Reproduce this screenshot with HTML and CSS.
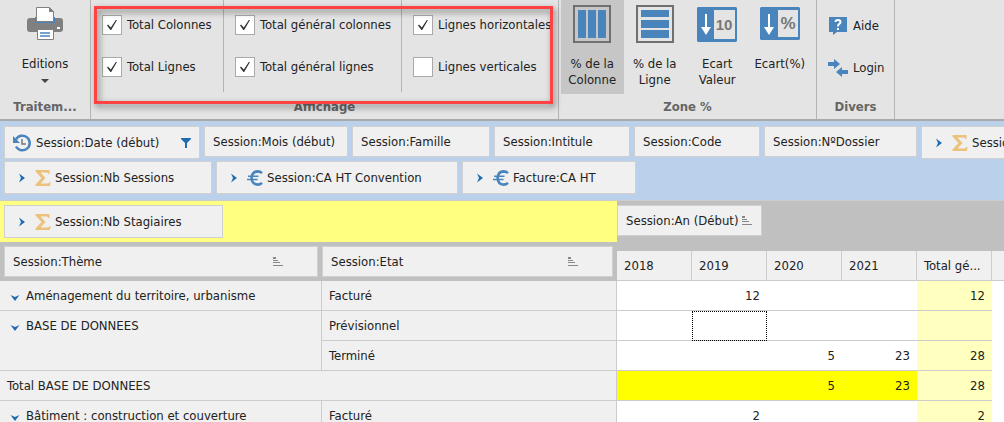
FILE: index.html
```html
<!DOCTYPE html>
<html lang="fr">
<head>
  <meta charset="UTF-8">
  <meta name="viewport" content="width=device-width, initial-scale=1.0">
  <title>Statistiques sessions</title>
  <link rel="stylesheet" href="styles.css">
</head>
<body>
  <!-- Shared icons -->
  <svg class="sprite" aria-hidden="true">
    <symbol id="sort" viewBox="0 0 10 10">
      <path fill="#888" d="M0 0h3v2H0zM0 3h5v1H0zM0 5h7v1H0zM0 8h10v1H0z"/>
    </symbol>
    <symbol id="sigma" viewBox="0 0 15 16">
      <path fill="#ecc17c" d="M0 0h14v4h-1q-.5-1.500-2-1.500H5l5 5.500-5 5.500h7q1.500 0 2-1.500h1l-.5 4H0v-1.500L6 8 0 1.500z"/>
    </symbol>
    <symbol id="euro" viewBox="0 0 16 16">
      <path fill="none" stroke="#4a84bd" stroke-width="2.600" d="M15 3.200Q13.200 1.400 10.500 1.400 5 1.600 4.600 8 5 14.400 10.500 14.600q2.700 0 4.500-1.800"/>
      <path stroke="#4a84bd" stroke-width="1.500" d="M1 6.200h10.500M0 9.500h10.500"/>
    </symbol>
    <symbol id="chevron" viewBox="0 0 6 10">
      <path fill="#1f6bb0" d="M0 .5 6 5 0 9.500 2 5z"/>
    </symbol>
    <symbol id="down" viewBox="0 0 10 6">
      <path fill="#1f6bb0" d="M.5 0 5 2l4.500-2L5 6z"/>
    </symbol>
  </svg>

  <header class="ribbon">
    <section class="group group-print">
      <div class="group-body">
        <button class="tool">
          <span class="tool-icon">
            <svg width="36" height="34" viewBox="0 0 36 34">
              <path fill="#4a84bd" d="M8 10h20v6H8z"/>
              <path fill="#808080" d="M3 11h5v5h20v-5h5q3 0 3 3v8q0 3-3 3H3q-3 0-3-3v-8q0-3 3-3z"/>
              <path fill="#fff" stroke="#808080" d="M9.500.5h13l4 4V14.500h-17zM10.500 22.500h16v10h-16z"/>
              <path fill="#808080" d="M22 0v5h5z"/>
              <path stroke="#4a84bd" stroke-width="1.500" d="M13 26h10M13 29h10"/>
              <path fill="#fff" d="M30 20h3v2h-3z"/>
            </svg>
          </span>
          Editions
          <span class="caret"></span>
        </button>
      </div>
      <h2>Traitem...</h2>
    </section>

    <section class="group group-view">
      <div class="group-body">
        <div class="checks checks-totals">
          <label><input type="checkbox" checked>Total Colonnes</label>
          <label><input type="checkbox" checked>Total Lignes</label>
        </div>
        <div class="checks checks-general">
          <label><input type="checkbox" checked>Total général colonnes</label>
          <label><input type="checkbox" checked>Total général lignes</label>
        </div>
        <div class="checks">
          <label><input type="checkbox" checked>Lignes horizontales</label>
          <label><input type="checkbox">Lignes verticales</label>
        </div>
      </div>
      <h2>Affichage</h2>
      <div class="highlight"></div>
    </section>

    <section class="group group-percent">
      <div class="group-body">
        <button class="tool active">
          <span class="tool-icon">
            <svg width="38" height="38" viewBox="0 0 38 38">
              <path fill="none" stroke="#707070" stroke-width="2" d="M1 1h36v36H1z"/>
              <path fill="#4a84bd" d="M5 5h8v28H5zM15 5h8v28h-8zM25 5h8v28h-8z"/>
            </svg>
          </span>
          % de la<br>Colonne
        </button>
        <button class="tool">
          <span class="tool-icon">
            <svg width="38" height="38" viewBox="0 0 38 38">
              <path fill="none" stroke="#707070" stroke-width="2" d="M1 1h36v36H1z"/>
              <path fill="#4a84bd" d="M5 5h28v7H5zM5 15h28v8H5zM5 25h28v8H5z"/>
            </svg>
          </span>
          % de la<br>Ligne
        </button>
        <button class="tool">
          <span class="tool-icon">
            <svg width="40" height="35" viewBox="0 0 40 35">
              <path fill="#4a84bd" fill-rule="evenodd" d="M1 0h38l1 1v33l-1 1H1l-1-1V1zM17 3v29h21V3z"/>
              <path fill="#fff" d="M8 7h2v13h4l-5 8-5-8h4z"/>
              <text x="27" y="23" class="icon-text">10</text>
            </svg>
          </span>
          Ecart<br>Valeur
        </button>
        <button class="tool">
          <span class="tool-icon">
            <svg width="40" height="35" viewBox="0 0 40 35">
              <path fill="#4a84bd" fill-rule="evenodd" d="M1 0h38l1 1v31l-1 1H1l-1-1V1zM18 3v27h20V3z"/>
              <path fill="#fff" d="M8 7h2v13h4l-5 8-5-8h4z"/>
              <text x="28" y="22" class="icon-text icon-text-large">%</text>
            </svg>
          </span>
          Ecart(%)
        </button>
      </div>
      <h2>Zone %</h2>
    </section>

    <section class="group group-misc">
      <div class="group-body">
        <button class="link-tool">
          <svg width="20" height="20" viewBox="0 0 20 20">
            <path fill="#4a84bd" d="M1 1h18v15H9l-4 3v-3H1z"/>
            <path fill="none" stroke="#fff" stroke-width="2" d="M7.500 6q0-2 2.500-2t2.500 2q0 1-1.300 2T10 10.500"/>
            <path fill="#fff" d="M9 12h2v2H9z"/>
          </svg>
          Aide
        </button>
        <button class="link-tool">
          <svg width="20" height="20" viewBox="0 0 20 20">
            <path fill="#4a84bd" d="M0 4h6V1l6 5-6 5V8H0zM20 12h-6V9l-6 5 6 5v-3h6z"/>
          </svg>
          Login
        </button>
      </div>
      <h2>Divers</h2>
    </section>
  </header>

  <div class="filters">
    <div class="filter-row">
      <button class="field w-date">
        <svg width="18" height="18" viewBox="0 0 18 18">
          <path fill="none" stroke="#4a84bd" stroke-width="2.500" d="M3 5.500A7.300 7.300 0 1 1 3 12.500"/>
          <path fill="#4a84bd" d="M0 2v7h7z"/>
          <path fill="none" stroke="#777" stroke-width="1.500" d="M9 5v5h4"/>
        </svg>
        Session:Date (début)
        <svg class="funnel" width="10" height="10" viewBox="0 0 10 10"><path fill="#1f6bb0" d="M0 0h10v1L6 5v5H4V5L0 1z"/></svg>
      </button>
      <button class="field small w-month">Session:Mois (début)</button>
      <button class="field small w-family">Session:Famille</button>
      <button class="field small w-title">Session:Intitule</button>
      <button class="field small w-code">Session:Code</button>
      <button class="field small w-number">Session:NºDossier</button>
      <button class="field measure w-sessions"><svg class="chevron"><use href="#chevron"/></svg><svg class="sigma"><use href="#sigma"/></svg>Session:</button>
    </div>
    <div class="filter-row">
      <button class="field measure w-sessions"><svg class="chevron"><use href="#chevron"/></svg><svg class="sigma"><use href="#sigma"/></svg>Session:Nb Sessions</button>
      <button class="field measure w-convention"><svg class="chevron"><use href="#chevron"/></svg><svg class="sigma"><use href="#euro"/></svg>Session:CA HT Convention</button>
      <button class="field measure w-invoice"><svg class="chevron"><use href="#chevron"/></svg><svg class="sigma"><use href="#euro"/></svg>Facture:CA HT</button>
    </div>
  </div>

  <table class="pivot">
    <colgroup>
      <col class="col-theme">
      <col class="col-state">
      <col class="col-value" span="5">
      <col>
    </colgroup>
    <thead>
      <tr class="row-data">
        <td class="data-zone" colspan="2">
          <button class="field measure w-trainees"><svg class="chevron"><use href="#chevron"/></svg><svg class="sigma"><use href="#sigma"/></svg>Session:Nb Stagiaires</button>
        </td>
        <td class="column-zone" colspan="6" rowspan="2">
          <button class="field small w-year">Session:An (Début)<svg class="sort"><use href="#sort"/></svg></button>
        </td>
      </tr>
      <tr class="row-gap">
        <th class="row-zone" rowspan="2">
          <button class="field small sortable">Session:Thème<svg class="sort"><use href="#sort"/></svg></button>
        </th>
        <th class="row-zone last" rowspan="2">
          <button class="field small sortable">Session:Etat<svg class="sort"><use href="#sort"/></svg></button>
        </th>
      </tr>
      <tr class="years">
        <th>2018</th>
        <th>2019</th>
        <th>2020</th>
        <th>2021</th>
        <th>Total gé...</th>
        <td></td>
      </tr>
    </thead>
    <tbody>
      <tr>
        <th class="theme"><svg class="down"><use href="#down"/></svg>Aménagement du territoire, urbanisme</th>
        <th>Facturé</th>
        <td></td><td>12</td><td></td><td></td><td class="total">12</td><td class="rest"></td>
      </tr>
      <tr>
        <th class="theme" rowspan="2"><svg class="down"><use href="#down"/></svg>BASE DE DONNEES</th>
        <th>Prévisionnel</th>
        <td></td><td class="focused"></td><td></td><td></td><td class="total"></td><td class="rest"></td>
      </tr>
      <tr>
        <th>Terminé</th>
        <td></td><td></td><td>5</td><td>23</td><td class="total">28</td><td class="rest"></td>
      </tr>
      <tr class="subtotal">
        <th colspan="2">Total BASE DE DONNEES</th>
        <td></td><td></td><td>5</td><td>23</td><td class="total">28</td><td class="rest"></td>
      </tr>
      <tr>
        <th class="theme"><svg class="down"><use href="#down"/></svg>Bâtiment : construction et couverture</th>
        <th>Facturé</th>
        <td></td><td>2</td><td></td><td></td><td class="total">2</td><td class="rest"></td>
      </tr>
    </tbody>
  </table>
</body>
</html>
```
FILE: styles.css
```css
* {
  box-sizing: border-box;
}

body {
  margin: 0;
  height: 100vh;
  overflow: hidden;
  background: #fff;
  color: #222;
  font-family: Tahoma, "DejaVu Sans Condensed", "DejaVu Sans", sans-serif;
  font-size: 13px;
  line-height: 16px;
}

button {
  padding: 0;
  border: none;
  background: none;
  color: inherit;
  font: inherit;
  white-space: nowrap;
}

svg {
  display: block;
  flex: none;
}

.sprite {
  display: none;
}

/* Ribbon */
.ribbon {
  display: flex;
  background: #e4e4e4;
  border-bottom: 2px solid #aaa;
}

.group {
  position: relative;
  border-right: 1px solid #b4b4b4;
}

.group-print { width: 91px; }
.group-view { width: 468px; }
.group-percent { width: 258px; }
.group-misc { width: 78px; }

.group h2 {
  margin: 0;
  padding: 5px 0 4px;
  color: #666;
  font-size: 13px;
  line-height: 16px;
  text-align: center;
}

.group-body {
  display: flex;
  height: 94px;
}

.tool {
  display: flex;
  flex: 1;
  flex-direction: column;
  align-items: center;
}

.tool-icon {
  display: flex;
  align-items: center;
  height: 40px;
  margin: 4px 0 12px;
}

.group-percent .group-body {
  padding: 0 5px 0 2px;
}

.active {
  background: #c6c6c6;
}

.icon-text {
  fill: #777;
  font-family: "Liberation Sans", sans-serif;
  font-size: 15px;
  font-weight: bold;
  text-anchor: middle;
}

.icon-text-large {
  font-size: 17px;
}

.caret {
  margin-top: 7px;
  border: 4px solid transparent;
  border-top-color: #444;
}

.checks {
  display: flex;
  flex-direction: column;
  gap: 22px;
  height: 92px;
  padding: 15px 0 0 11px;
}

.checks-totals,
.checks-general {
  border-right: 1px solid #b4b4b4;
}

.checks-totals { width: 133px; }
.checks-general { width: 178px; }

.checks label {
  display: flex;
  align-items: center;
  gap: 5px;
  white-space: nowrap;
}

.checks input {
  appearance: none;
  width: 20px;
  height: 20px;
  margin: 0;
  padding: 4px;
  border: 1px solid #aaa;
  background: #fff;
}

.checks input:checked::before {
  content: "";
  display: block;
  width: 10px;
  height: 10px;
  background: #333;
  clip-path: polygon(0 55%, 10% 45%, 38% 75%, 88% 0, 100% 0, 42% 100%, 34% 100%);
}

.highlight {
  position: absolute;
  inset: 6px 5px 15px 3px;
  border: 3px solid #ff4343;
  filter: drop-shadow(2px 3px 3px rgba(0, 0, 0, 0.5));
  pointer-events: none;
}

.group-misc .group-body {
  flex-direction: column;
  gap: 22px;
  padding: 16px 0 0 11px;
}

.link-tool {
  display: flex;
  align-items: center;
  gap: 5px;
  height: 20px;
}

/* Field buttons */
.field {
  display: flex;
  align-items: center;
  flex: none;
  height: 33px;
  padding: 0 8px;
  border: 1px solid #d0d0d0;
  background: #f0f0f0;
}

.small {
  height: 31px;
}

.measure {
  padding-left: 14px;
}

.chevron {
  width: 6px;
  height: 10px;
  margin-right: 10px;
}

.sigma {
  width: 16px;
  height: 16px;
  margin-right: 4px;
}

.sort {
  width: 10px;
  height: 10px;
  margin-left: 4px;
}

.w-date { width: 196px; gap: 5px; }
.w-month { width: 144px; }
.w-family { width: 138px; }
.w-title { width: 136px; }
.w-code { width: 126px; }
.w-number { width: 153px; }
.w-sessions { width: 208px; }
.w-convention { width: 242px; }
.w-invoice { width: 174px; }
.w-trainees { width: 219px; }
.w-year { width: 145px; }

.funnel {
  margin-left: auto;
}

.filters {
  padding: 5px 0 6px 4px;
  background: #bad0eb;
  border-bottom: 1px solid #ccc;
}

.filter-row {
  display: flex;
  align-items: flex-start;
  gap: 4px;
  overflow: hidden;
}

.filter-row + .filter-row {
  margin-top: 2px;
}

/* Pivot grid */
.pivot {
  width: 100%;
  table-layout: fixed;
  border-collapse: separate;
  border-spacing: 0;
}

.col-theme { width: 322px; }
.col-state { width: 295px; }
.col-value { width: 75px; }

.pivot th,
.pivot td {
  padding: 0 7px;
  font-weight: normal;
}

.pivot .row-data { height: 41px; }
.pivot .row-gap { height: 9px; }

.pivot .data-zone {
  padding: 4px;
  background: #ffff80;
}

.pivot .column-zone {
  padding: 4px 0 0;
  background: #c0c0c0;
  vertical-align: top;
}

.pivot .row-zone {
  padding: 4px 0 4px 4px;
  background: #c0c0c0;
}

.pivot .row-zone.last {
  padding: 4px 4px 4px 0;
}

.row-zone:not(.last) .sortable {
  width: 314px;
}

.sortable {
  width: 100%;
  padding-right: 34px;
}

.sortable .sort {
  margin-left: auto;
}

.years th,
.years td {
  height: 30px;
  background: #f0f0f0;
  border-bottom: 1px solid #ccc;
  text-align: left;
}

.years th {
  border-right: 1px solid #ccc;
  white-space: nowrap;
}

tbody th,
tbody td {
  height: 30px;
  border-bottom: 1px solid #ccc;
}

tbody th {
  background: #f0f0f0;
  border-right: 1px solid #ccc;
  text-align: left;
  white-space: nowrap;
}

tbody td {
  text-align: right;
}

.pivot .theme {
  padding: 7px 0 0 26px;
  vertical-align: top;
}

.theme .down {
  float: left;
  width: 10px;
  height: 6px;
  margin: 7px 0 0 -16px;
}

.subtotal td {
  background: #ff0;
}

.pivot .total {
  background: #ffffc0;
}

.pivot .rest {
  background: #fff;
  border: none;
}

.focused {
  outline: 1px dotted #000;
  outline-offset: -1px;
}
```
